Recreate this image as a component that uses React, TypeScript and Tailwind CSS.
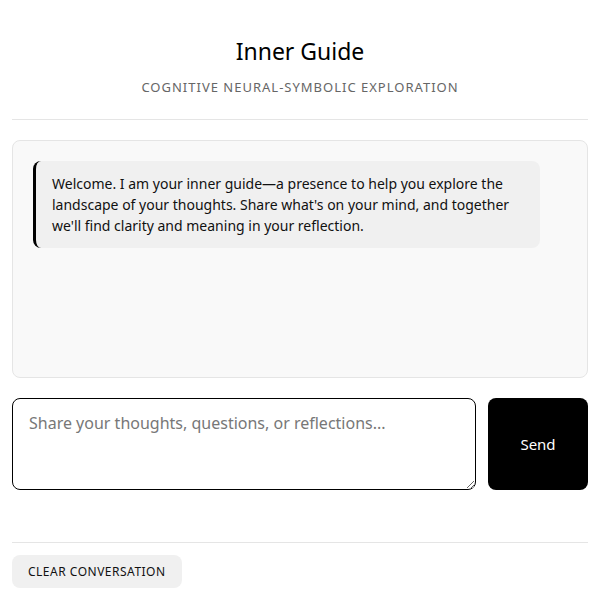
import { useState } from 'react';

const font = { fontFamily: '"Noto Sans", "Open Sans", sans-serif' };

export default function App() {
  const [draft, setDraft] = useState('');

  return (
    <div className="min-h-screen bg-white text-black" style={font}>
      <main className="flex flex-col px-3">
        <header className="flex flex-col items-center pt-[33px] pb-[23px] border-b border-[#e5e5e5]">
          <h1 className="text-[23px] leading-[36px] font-normal">Inner Guide</h1>
          <p className="mt-[9px] text-[13px] leading-[18px] tracking-[1px] text-[#666] uppercase">
            Cognitive Neural-Symbolic Exploration
          </p>
        </header>

        <section className="mt-5 h-[238px] rounded-lg border border-[#e5e5e5] bg-[#f9f9f9] p-5">
          <div className="w-[507px] rounded-lg border-l-[3px] border-black bg-[#f0f0f0] py-[12px] pl-[16px] pr-4 text-[14px] leading-[21px] text-[#111]">
            Welcome. I am your inner guide—a presence to help you explore the
            landscape of your thoughts. Share what's on your mind, and together
            we'll find clarity and meaning in your reflection.
          </div>
        </section>

        <div className="mt-5 flex gap-3">
          <textarea
            value={draft}
            onChange={(e) => setDraft(e.target.value)}
            placeholder="Share your thoughts, questions, or reflections..."
            className="h-[92px] flex-1 resize-y rounded-lg border border-black bg-white px-4 py-[12px] text-[16px] leading-[24px] placeholder:text-[#777] outline-none"
            style={font}
          />
          <button className="h-[92px] w-[100px] rounded-lg bg-black text-[15px] text-white">
            Send
          </button>
        </div>

        <div className="mt-[52px] border-t border-[#e5e5e5] pt-3">
          <button className="h-[33px] rounded-lg bg-[#f0f0f0] px-4 text-[12px] tracking-[0.5px] uppercase text-[#111]">
            Clear Conversation
          </button>
        </div>
      </main>
    </div>
  );
}
